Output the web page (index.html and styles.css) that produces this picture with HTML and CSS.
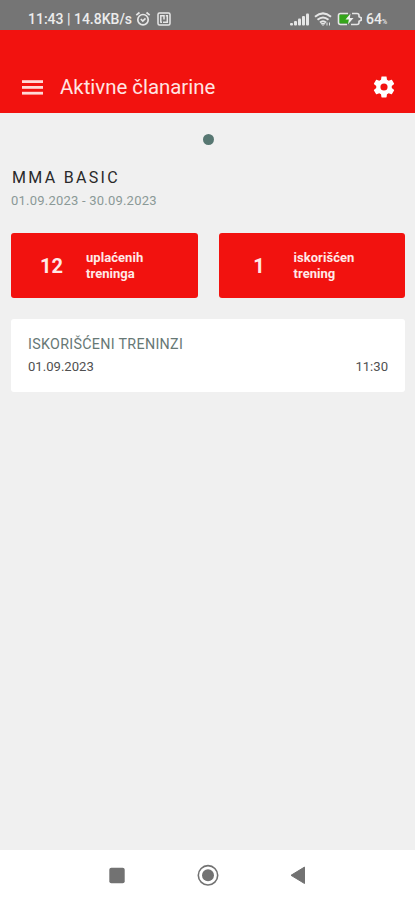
FILE: index.html
```html
<!DOCTYPE html>
<html lang="sr-Latn">
<head>
<meta charset="utf-8">
<meta name="viewport" content="width=device-width, initial-scale=1">
<title>Aktivne članarine</title>
<link rel="stylesheet" href="styles.css">
</head>
<body>
<div class="status">
  <span class="status-time">11:43 | 14.8KB/s</span>
  <svg class="alarm" width="16" height="16" viewBox="0 0 16 16" fill="none" stroke="#e6e6e6" stroke-width="1.7"><circle cx="8" cy="8.7" r="5.2"/><path d="M1.3 4.2 4.5 1.5M14.7 4.2 11.5 1.5M5.8 8l2 2 2.7-2.6"/></svg>
  <svg class="nfc" width="14" height="14" viewBox="0 0 14 14" fill="none" stroke="#e6e6e6" stroke-width="1.5"><rect x="1" y="1" width="12" height="12" rx="1.5"/><path d="M3.8 10.8V3.8H7v3.7M6 10.3h4.3V3.8H8.8M3.8 10.3H5"/></svg>
  <span class="spacer"></span>
  <svg class="signal" width="20" height="13" viewBox="0 0 20 13" fill="#e6e6e6"><rect x="0" y="10" width="3" height="2.5" rx="1"/><rect x="4" y="8" width="3" height="4.5" rx="1"/><rect x="8" y="5.5" width="3" height="7" rx="1"/><rect x="12" y="3" width="3" height="9.5" rx="1"/><rect x="16" y="0.5" width="3" height="12" rx="1"/></svg>
  <svg class="wifi" width="18" height="14" viewBox="0 0 18 14" fill="none" stroke="#e6e6e6" stroke-width="2"><path d="M1 4.8Q9-2 17 4.8M3.5 7.8q5.5-4.5 11 0M6 10.5q3-2.5 6 0"/><path d="m7.2 11.5 1.8 2 1.8-2ZM13 10.5v3M15.5 10.5v3" stroke-width="1"/></svg>
  <svg class="battery" width="26" height="14" viewBox="0 0 26 14"><rect x="2" y="2.5" width="11" height="9" fill="#35a51b"/><path d="M11 1.5H3.5Q1.5 1.5 1.5 3.5v7q0 2 2 2H10M15 1.5h5q2 0 2 2v1.2l2.2 1v2.6l-2.2 1v1.2q0 2-2 2h-6" fill="none" stroke="#e6e6e6" stroke-width="1.6"/><path d="M13.5 1.5 8.5 7.5h3.4l-1 5 5.6-6.4h-3.6Z" fill="#f0f0f0"/></svg>
  <span class="level">64<small>%</small></span>
</div>
<header class="bar">
  <svg class="menu" width="21" height="15" viewBox="0 0 21 15" fill="#ffd9d6"><rect y="0.2" width="21" height="2.8"/><rect y="6" width="21" height="2.8"/><rect y="11.8" width="21" height="2.8"/></svg>
  <h1>Aktivne članarine</h1>
  <svg class="gear" width="26" height="26" viewBox="0 0 24 24" fill="#fff"><path d="M19.14 12.94c.04-.3.06-.61.06-.94 0-.32-.02-.64-.07-.94l2.03-1.58c.18-.14.23-.41.12-.61l-1.92-3.32c-.12-.22-.37-.29-.59-.22l-2.39.96c-.5-.38-1.03-.7-1.62-.94l-.36-2.54c-.04-.24-.24-.41-.48-.41h-3.84c-.24 0-.43.17-.47.41l-.36 2.54c-.59.24-1.13.57-1.62.94l-2.39-.96c-.22-.08-.47 0-.59.22L2.74 8.87c-.12.21-.08.47.12.61l2.03 1.58c-.05.3-.09.63-.09.94s.02.64.07.94l-2.03 1.58c-.18.14-.23.41-.12.61l1.92 3.32c.12.22.37.29.59.22l2.39-.96c.5.38 1.03.7 1.62.94l.36 2.54c.05.24.24.41.48.41h3.84c.24 0 .44-.17.47-.41l.36-2.54c.59-.24 1.13-.56 1.62-.94l2.39.96c.22.08.47 0 .59-.22l1.92-3.32c.12-.22.07-.47-.12-.61ZM12 15.3A3.3 3.3 0 1 1 12 8.7a3.3 3.3 0 0 1 0 6.6Z"/></svg>
</header>
<main>
  <div class="pager"></div>
  <h2>MMA BASIC</h2>
  <p class="period">01.09.2023 - 30.09.2023</p>
  <div class="stats">
    <div class="stat"><b>12</b><span>uplaćenih<br>treninga</span></div>
    <div class="stat"><b>1</b><span>iskorišćen<br>trening</span></div>
  </div>
  <section class="card">
    <h3>ISKORIŠĆENI TRENINZI</h3>
    <div class="row"><span>01.09.2023</span><span class="time">11:30</span></div>
  </section>
</main>
<nav>
  <svg width="18" height="18" viewBox="0 0 18 18"><rect x="1.3" y="1.8" width="15.4" height="15.4" rx="2" fill="#727272"/></svg>
  <svg width="22" height="22" viewBox="0 0 22 22"><circle cx="11" cy="11.3" r="9.7" fill="none" stroke="#727272" stroke-width="1.6"/><circle cx="11" cy="11.3" r="6" fill="#727272"/></svg>
  <svg width="18" height="18" viewBox="0 0 18 18"><path d="M2 9.3 15.5 1.1v16.4Z" fill="#727272" stroke="#727272" stroke-linejoin="round"/></svg>
</nav>
</body>
</html>
```
FILE: styles.css
```css
* { box-sizing: border-box; margin: 0; }
body { height: 900px; display: flex; flex-direction: column; background: #f0f0f0; font-family: Roboto, "Liberation Sans", sans-serif; overflow: hidden; }
svg { display: block; flex: none; }
.status { height: 30px; flex: none; display: flex; align-items: center; padding: 8px 26px 0 28px; background: #757575; color: #ececec; font-size: 14px; font-weight: 500; white-space: nowrap; }
.status-time { width: 107px; }
.nfc { margin-left: 6px; }
.spacer { flex: 1; }
.wifi { margin-left: 4px; }
.battery { margin-left: 5px; }
.level { width: 23px; margin-left: 3px; }
.level small { font-size: 7px; }
.bar { height: 83px; flex: none; display: flex; align-items: center; padding: 31px 18px 0 22px; background: #f2120f; color: #ffe4e2; }
h1 { flex: 1; margin-left: 17px; font-size: 20.4px; line-height: 24px; font-weight: 400; }
main { flex: 1; padding: 21px 10px 0 11px; }
.pager { width: 11px; height: 11px; margin: 0 auto; border-radius: 50%; background: #577772; }
h2 { margin: 23px 0 0 1px; font-size: 16px; line-height: 20px; font-weight: 400; letter-spacing: 2.3px; color: #292929; }
.period { margin-top: 5px; font-size: 13px; line-height: 16px; letter-spacing: 0.22px; color: #8b9997; }
.stats { display: grid; grid-template-columns: 1fr 1fr; gap: 21px; margin-top: 24px; }
.stat { height: 65px; display: flex; align-items: center; padding-right: 20px; background: #f2120f; border-radius: 3px; color: #ffe9e7; }
.stat b { width: 75px; padding-left: 6px; text-align: center; font-size: 20px; font-weight: 700; }
.stat span { font-size: 13px; line-height: 16px; font-weight: 700; letter-spacing: 0.05px; }
.card { height: 73px; margin-top: 21px; padding: 16px 17px 0; background: #fff; border-radius: 3px; }
h3 { font-size: 14.3px; line-height: 18px; font-weight: 400; letter-spacing: 0.3px; color: #677875; }
.row { display: flex; justify-content: space-between; margin-top: 6px; font-size: 13.1px; line-height: 16px; color: #505050; }
nav { height: 50px; flex: none; display: flex; justify-content: space-between; align-items: center; padding: 0 108px; background: #fff; }
```
